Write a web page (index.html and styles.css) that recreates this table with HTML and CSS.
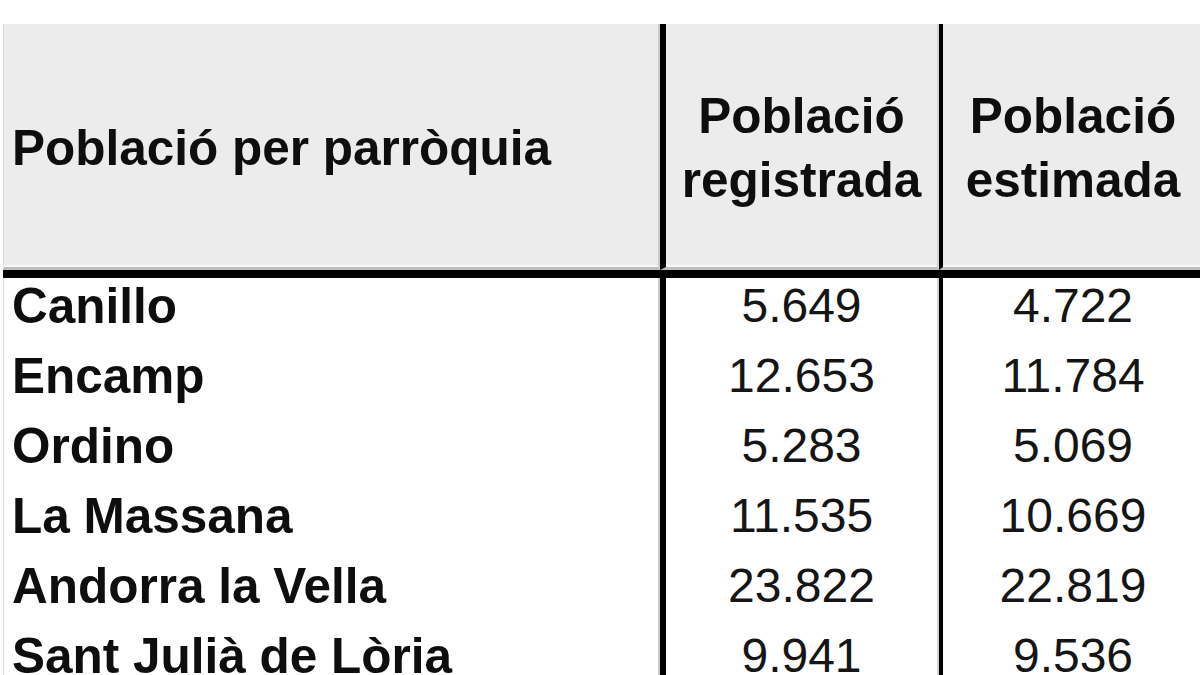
FILE: index.html
```html
<!DOCTYPE html>
<html lang="ca">
<head>
<meta charset="utf-8">
<title>Població per parròquia</title>
<link rel="stylesheet" href="styles.css">
</head>
<body>
<div class="sheet">
  <div class="cell head c1"><span class="htext">Població per parròquia</span></div>
  <div class="cell head c2"><span class="htext center">Població<br>registrada</span></div>
  <div class="cell head c3"><span class="htext center">Població<br>estimada</span></div>
  <div class="rule"></div>

  <div class="cell name c1">Canillo</div>
  <div class="cell num c2">5.649</div>
  <div class="cell num c3">4.722</div>

  <div class="cell name c1">Encamp</div>
  <div class="cell num c2">12.653</div>
  <div class="cell num c3">11.784</div>

  <div class="cell name c1">Ordino</div>
  <div class="cell num c2">5.283</div>
  <div class="cell num c3">5.069</div>

  <div class="cell name c1">La Massana</div>
  <div class="cell num c2">11.535</div>
  <div class="cell num c3">10.669</div>

  <div class="cell name c1">Andorra la Vella</div>
  <div class="cell num c2">23.822</div>
  <div class="cell num c3">22.819</div>

  <div class="cell name c1">Sant Julià de Lòria</div>
  <div class="cell num c2">9.941</div>
  <div class="cell num c3">9.536</div>
</div>
</body>
</html>
```
FILE: styles.css
```css
html, body {
  margin: 0;
  padding: 0;
  background: #ffffff;
}

body {
  width: 1200px;
  height: 675px;
  overflow: hidden;
  font-family: "Liberation Sans", Arial, sans-serif;
  color: #0e0e0e;
}

.sheet {
  display: grid;
  grid-template-columns: 657px 279px 264px;
  margin-top: 24px;
  margin-left: 3px;
  width: 1200px;
}

.cell {
  box-sizing: border-box;
}

.c1 {
  border-left: 1px solid #dcdcdc;
  border-right: 2px solid #c9c9c9;
  padding-left: 8px;
}

.c2 {
  border-left: 6px solid #000000;
  border-right: 2px solid #d2d2d2;
  text-align: center;
}

.c3 {
  border-left: 4px solid #000000;
  text-align: center;
}

.head {
  height: 246px;
  background: #ececec;
  border-bottom: 3px solid #bdbdbd;
  box-shadow: inset 0 -2px 0 #f7f7f7;
  display: flex;
  align-items: center;
  padding-top: 5px;
}

.head.c2,
.head.c3 {
  justify-content: center;
}

.htext {
  font-weight: bold;
  font-size: 49.5px;
  line-height: 64px;
  white-space: nowrap;
}

.htext.center {
  text-align: center;
}

.rule {
  grid-column: 1 / -1;
  height: 8px;
  background: #000000;
}

.name,
.num {
  height: 70px;
  line-height: 56px;
  padding-bottom: 14px;
  white-space: nowrap;
}

.name {
  font-weight: bold;
  font-size: 49.5px;
}

.num {
  font-size: 48px;
  color: #151515;
}
```
